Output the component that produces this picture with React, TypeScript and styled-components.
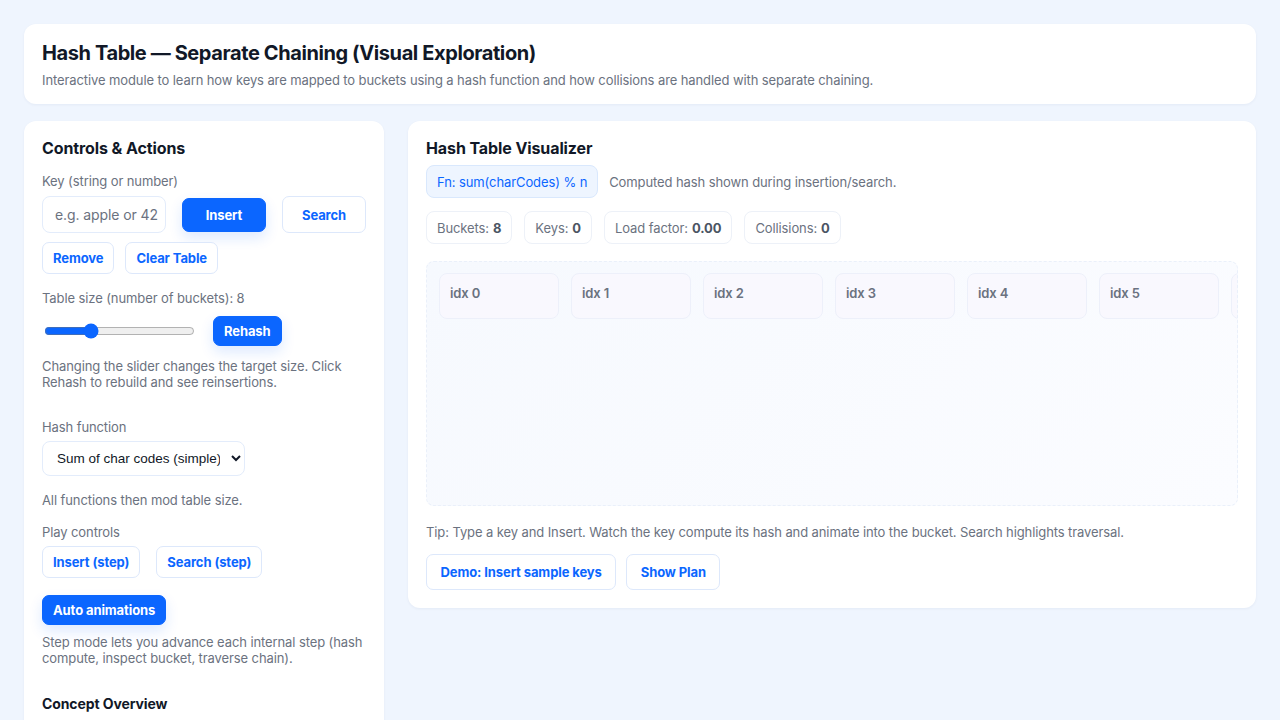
import React, { useState } from "react";
import styled, { createGlobalStyle } from "styled-components";

const GlobalStyle = createGlobalStyle`
  * { box-sizing: border-box; }
  body {
    margin: 0;
    background: #eff5fe;
    font-family: Inter, "Noto Sans", "Liberation Sans", sans-serif;
    letter-spacing: -0.1px;
    color: #0f172a;
  }
`;

const Page = styled.div`
  padding: 24px;
  display: flex;
  flex-direction: column;
  gap: 17px;
`;

const Card = styled.section`
  background: #ffffff;
  border-radius: 12px;
  box-shadow: 0 1px 3px rgba(15, 40, 90, 0.05);
  padding: 17px 18px 18px;
  min-width: 0;
`;

const HeaderCard = styled(Card)`
  padding-bottom: 16px;
`;

const Title = styled.h1`
  margin: 0;
  font-size: 20px;
  line-height: 24px;
  font-weight: 700;
  letter-spacing: -0.4px;
  color: #111827;
`;

const Subtitle = styled.p`
  margin: 7px 0 0;
  font-size: 13px;
  line-height: 16px;
  color: #6b7280;
`;

const Columns = styled.div`
  display: grid;
  grid-template-columns: 360px minmax(0, 1fr);
  gap: 24px;
  align-items: start;
`;

const CardTitle = styled.h2`
  margin: 0;
  font-size: 16px;
  line-height: 20px;
  font-weight: 700;
  color: #111827;
`;

const Label = styled.div<{ $top?: number }>`
  font-size: 13px;
  line-height: 16px;
  color: #6b7280;
  margin-top: ${(p) => p.$top ?? 0}px;
`;

const Row = styled.div<{ $gap?: number; $top?: number }>`
  display: flex;
  align-items: center;
  flex-wrap: wrap;
  gap: ${(p) => p.$gap ?? 16}px;
  margin-top: ${(p) => p.$top ?? 0}px;
`;

const KeyInput = styled.input`
  width: 124px;
  height: 37px;
  border: 1px solid #e3ecfb;
  border-radius: 8px;
  padding: 0 4px 0 12px;
  font-family: inherit;
  font-size: 14px;
  letter-spacing: -0.1px;
  color: #111827;
  background: #fff;
  outline: none;
  &::placeholder { color: #6b7280; }
`;

const Button = styled.button<{ $primary?: boolean; $w?: number; $h?: number; $pad?: number }>`
  height: ${(p) => p.$h ?? 32}px;
  width: ${(p) => (p.$w ? `${p.$w}px` : "auto")};
  padding: 0 ${(p) => p.$pad ?? 10}px;
  border-radius: 7px;
  font-family: inherit;
  font-size: 13px;
  letter-spacing: -0.1px;
  font-weight: 700;
  cursor: pointer;
  border: 1px solid ${(p) => (p.$primary ? "#0b66ff" : "#dde8fb")};
  background: ${(p) => (p.$primary ? "#0b66ff" : "#ffffff")};
  color: ${(p) => (p.$primary ? "#ffffff" : "#0b66ff")};
  box-shadow: ${(p) => (p.$primary ? "0 6px 14px rgba(11, 102, 255, 0.14)" : "none")};
`;

const Slider = styled.input`
  width: 151px;
  margin: 0 0 0 2px;
  accent-color: #0b66ff;
`;

const Select = styled.select`
  height: 35px;
  width: 203px;
  border: 1px solid #e3ecfb;
  border-radius: 8px;
  padding: 0 8px 0 10px;
  font-family: "Liberation Sans", Arial, sans-serif;
  font-size: 13.5px;
  letter-spacing: 0;
  color: #111827;
  background: #fff;
`;

const SectionTitle = styled.h3`
  margin: 29px 0 0;
  font-size: 14px;
  line-height: 18px;
  font-weight: 700;
  color: #111827;
`;

const Chip = styled.div<{ $accent?: boolean }>`
  display: inline-flex;
  align-items: center;
  height: 33px;
  padding: 0 10px;
  border-radius: 8px;
  font-size: 13px;
  border: 1px solid ${(p) => (p.$accent ? "#d9e8fd" : "#edf1f8")};
  background: ${(p) => (p.$accent ? "#eef5ff" : "#ffffff")};
  color: ${(p) => (p.$accent ? "#0b66ff" : "#6b7280")};
  b { font-weight: 700; color: #4b5563; margin-left: 4px; }
`;

const Note = styled.span`
  font-size: 13px;
  color: #6b7280;
`;

const BucketArea = styled.div`
  margin-top: 17px;
  height: 245px;
  border: 1px dashed #eaf0fa;
  border-radius: 8px;
  background: linear-gradient(135deg, #f6f9fe 0%, #fbfcff 100%);
  padding: 11px 12px;
  display: flex;
  gap: 12px;
  overflow: hidden;
`;

const Bucket = styled.div`
  flex: 0 0 120px;
  height: 46px;
  border: 1px solid #edf0fa;
  border-radius: 8px;
  background: #f9f8fe;
  padding: 11px 10px;
  font-size: 13px;
  font-weight: 600;
  color: #6b7280;
`;

const Tip = styled.p`
  margin: 18px 0 0;
  font-size: 13px;
  line-height: 16px;
  color: #6b7280;
`;

export default function App() {
  const [size, setSize] = useState(8);
  const buckets = Array.from({ length: size }, (_, i) => i);

  return (
    <>
      <GlobalStyle />
      <Page>
        <HeaderCard>
          <Title>Hash Table — Separate Chaining (Visual Exploration)</Title>
          <Subtitle>
            Interactive module to learn how keys are mapped to buckets using a hash function and how
            collisions are handled with separate chaining.
          </Subtitle>
        </HeaderCard>

        <Columns>
          <Card>
            <CardTitle>Controls &amp; Actions</CardTitle>
            <Label $top={15}>Key (string or number)</Label>
            <Row $top={7}>
              <KeyInput placeholder="e.g. apple or 42" />
              <Button $primary $w={84} $h={34}>Insert</Button>
              <Button $w={84} $h={37}>Search</Button>
            </Row>
            <Row $gap={11} $top={9}>
              <Button>Remove</Button>
              <Button>Clear Table</Button>
            </Row>
            <Label $top={16}>Table size (number of buckets): {size}</Label>
            <Row $gap={18} $top={10}>
              <Slider
                type="range"
                min={4}
                max={18}
                value={size}
                onChange={(e) => setSize(Number(e.target.value))}
              />
              <Button $primary $h={30}>Rehash</Button>
            </Row>
            <Label $top={12}>
              Changing the slider changes the target size. Click Rehash to rebuild and see reinsertions.
            </Label>
            <Label $top={29}>Hash function</Label>
            <Row $top={6}>
              <Select defaultValue="sum">
                <option value="sum">Sum of char codes (simple)</option>
                <option value="djb2">djb2</option>
              </Select>
            </Row>
            <Label $top={16}>All functions then mod table size.</Label>
            <Label $top={16}>Play controls</Label>
            <Row $top={6}>
              <Button>Insert (step)</Button>
              <Button>Search (step)</Button>
            </Row>
            <Row $top={17}>
              <Button $primary $h={30}>Auto animations</Button>
            </Row>
            <Label $top={9}>
              Step mode lets you advance each internal step (hash compute, inspect bucket, traverse chain).
            </Label>
            <SectionTitle>Concept Overview</SectionTitle>
            <Label $top={14}>
              A hash function maps each key to a bucket index. Keys that land in the same bucket are kept
              in a linked chain.
            </Label>
          </Card>

          <Card>
            <CardTitle>Hash Table Visualizer</CardTitle>
            <Row $gap={11} $top={7}>
              <Chip $accent>Fn: sum(charCodes) % n</Chip>
              <Note>Computed hash shown during insertion/search.</Note>
            </Row>
            <Row $gap={12} $top={13}>
              <Chip>Buckets:<b>{size}</b></Chip>
              <Chip>Keys:<b>0</b></Chip>
              <Chip>Load factor:<b>0.00</b></Chip>
              <Chip>Collisions:<b>0</b></Chip>
            </Row>
            <BucketArea>
              {buckets.map((i) => (
                <Bucket key={i}>idx {i}</Bucket>
              ))}
            </BucketArea>
            <Tip>
              Tip: Type a key and Insert. Watch the key compute its hash and animate into the bucket.
              Search highlights traversal.
            </Tip>
            <Row $gap={10} $top={14}>
              <Button $h={36} $pad={13.5}>Demo: Insert sample keys</Button>
              <Button $h={36} $pad={13.5}>Show Plan</Button>
            </Row>
          </Card>
        </Columns>
      </Page>
    </>
  );
}
